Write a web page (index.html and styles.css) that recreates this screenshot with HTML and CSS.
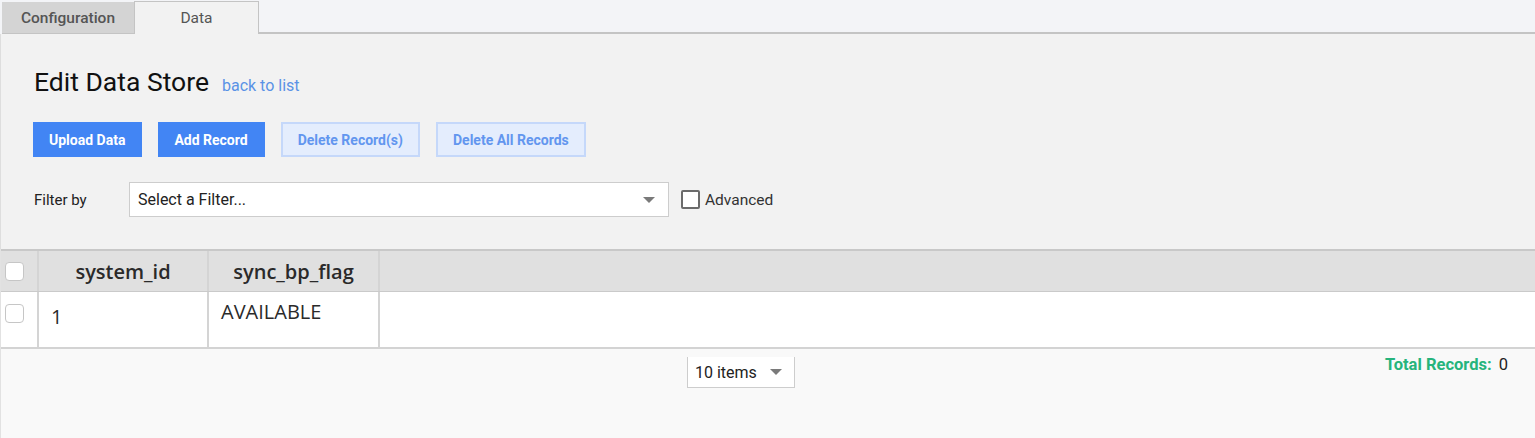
FILE: index.html
```html
<!DOCTYPE html>
<html lang="en">
<head>
    <meta charset="UTF-8">
    <meta name="viewport" content="width=device-width, initial-scale=1.0">
    <title>Edit Data Store</title>
    <link rel="stylesheet" href="styles.css">
</head>
<body>
    <div class="tabs">
        <div class="tab">Configuration</div>
        <div class="tab active">Data</div>
        <div class="tab-fill"></div>
    </div>

    <div class="panel">
        <div class="title-row">
            <h1>Edit Data Store</h1>
            <a href="#" class="back-link">back to list</a>
        </div>

        <div class="actions">
            <button class="btn">Upload Data</button>
            <button class="btn">Add Record</button>
            <button class="btn disabled">Delete Record(s)</button>
            <button class="btn disabled">Delete All Records</button>
        </div>

        <div class="filter-row">
            <span class="filter-label">Filter by</span>
            <div class="select filter-select">
                <span>Select a Filter...</span>
                <span class="caret"></span>
            </div>
            <label class="advanced">
                <span class="check"></span>
                Advanced
            </label>
        </div>
    </div>

    <div class="grid">
        <div class="grid-row grid-head">
            <div class="cell cell-check"><span class="row-check"></span></div>
            <div class="cell col-a">system_id</div>
            <div class="cell col-b">sync_bp_flag</div>
            <div class="cell col-rest"></div>
        </div>
        <div class="grid-row grid-body">
            <div class="cell cell-check"><span class="row-check"></span></div>
            <div class="cell col-a id-cell">1</div>
            <div class="cell col-b">AVAILABLE</div>
            <div class="cell col-rest"></div>
        </div>
        <div class="grid-footer">
            <div class="pager-spacer"></div>
            <div class="select page-size">
                <span>10 items</span>
                <span class="caret"></span>
            </div>
            <div class="total">
                <span class="total-label">Total Records:</span>
                <span class="total-value">0</span>
            </div>
        </div>
    </div>
</body>
</html>
```

FILE: styles.css
```css
body {
    margin: 0;
    font-family: Roboto, Arial, sans-serif;
    background-color: #f9f9f9;
    color: #222;
}

/* tab strip */
.tabs {
    display: flex;
    height: 34px;
    background-color: #f3f4f7;
    padding-left: 2px;
}

.tab {
    width: 132px;
    margin-top: 2px;
    background-color: #d4d4d4;
    color: #555;
    font-size: 15.5px;
    font-weight: 500;
    display: flex;
    align-items: center;
    justify-content: center;
    border-bottom: 1px solid #c4c4c4;
}

.tab.active {
    width: 123px;
    margin-top: 1px;
    background-color: #f2f2f2;
    border: 1px solid #c4c4c4;
    border-bottom: none;
    font-weight: 400;
}

.tab-fill {
    flex: 1;
    border-bottom: 2px solid #c4c4c4;
}

/* edit panel */
.panel {
    background-color: #f2f2f2;
    border-left: 1px solid #dedede;
    padding: 32px 33px 31px 32px;
    height: 152px;
}

.title-row {
    display: flex;
    align-items: baseline;
    gap: 13px;
    padding-left: 1px;
}

h1 {
    margin: 0;
    font-size: 26.5px;
    line-height: 32px;
    font-weight: 400;
    color: #111;
}

.back-link {
    color: #5a92e6;
    font-size: 16px;
    text-decoration: none;
}

.actions {
    display: flex;
    gap: 16px;
    margin-top: 24px;
}

.btn {
    height: 35px;
    padding: 0 17px 0 16px;
    border: none;
    background-color: #4285f4;
    color: #fff;
    font-family: Roboto, Arial, sans-serif;
    font-size: 14px;
    font-weight: 700;
}

.btn.disabled {
    padding: 0 15px;
    background-color: #e4edfd;
    border: 2px solid #c5d8fa;
    color: #6296ef;
}

.filter-row {
    display: flex;
    align-items: center;
    margin-top: 25px;
    padding-left: 1px;
}

.filter-label {
    width: 95px;
    font-size: 15px;
    color: #222;
}

.select {
    display: flex;
    align-items: center;
    justify-content: space-between;
    background-color: #fff;
    border: 1px solid #cdcdcd;
    box-sizing: border-box;
    font-size: 16px;
    color: #222;
}

.filter-select {
    width: 540px;
    height: 35px;
    padding: 0 13px 0 8px;
}

.caret {
    width: 0;
    height: 0;
    border-left: 6px solid transparent;
    border-right: 6px solid transparent;
    border-top: 6px solid #7a7a7a;
}

.advanced {
    display: flex;
    align-items: center;
    gap: 5px;
    margin-left: 12px;
    font-size: 15.5px;
    color: #333;
}

.check {
    width: 15px;
    height: 15px;
    border: 2px solid #6b6b6b;
    border-radius: 2px;
    background-color: #fff;
}

/* records grid */
.grid {
    border-left: 1px solid #e2e2e2;
    font-family: "Open Sans", "Noto Sans", sans-serif;
}

.grid-row {
    display: flex;
}

.grid-head {
    height: 40px;
    background-color: #e0e0e0;
    border-top: 2px solid #c8c8c8;
    border-bottom: 1px solid #cacaca;
}

.grid-body {
    height: 55px;
    background-color: #fff;
    border-bottom: 2px solid #d3d3d3;
}

.cell {
    box-sizing: border-box;
    border-right: 2px solid #d4d4d4;
    font-size: 20px;
    color: #2a2a2a;
}

.grid-head .cell {
    display: flex;
    align-items: center;
    justify-content: center;
    font-weight: 600;
}

.grid-body .cell {
    padding: 6px 12px 0;
}

.cell-check {
    width: 38px;
}

.grid .grid-body .cell-check {
    padding: 12px 0 0 4px;
}

.grid-head .cell-check {
    justify-content: flex-start;
    padding-left: 4px;
}

.row-check {
    display: block;
    width: 17px;
    height: 17px;
    border: 1px solid #c6c6c6;
    border-radius: 4px;
    background-color: #fff;
}

.col-a {
    width: 170px;
}

.col-b {
    width: 171px;
}

.grid-body .id-cell {
    padding-top: 11px;
}

.col-rest {
    flex: 1;
    border-right: none;
}

.grid-footer {
    display: flex;
    align-items: flex-start;
    height: 90px;
    background-color: #f9f9f9;
}

.pager-spacer {
    width: 686px;
}

.page-size {
    width: 108px;
    height: 31px;
    margin-top: 8px;
    padding: 0 12px 0 7px;
    border-top: none;
    font-family: Roboto, Arial, sans-serif;
}

.total {
    margin-left: auto;
    margin-top: 6px;
    padding-right: 27px;
    font-family: Roboto, Arial, sans-serif;
    font-size: 16.5px;
}

.total-label {
    color: #26b47c;
    font-weight: 700;
    margin-right: 3px;
}

.total-value {
    color: #222;
}
```
